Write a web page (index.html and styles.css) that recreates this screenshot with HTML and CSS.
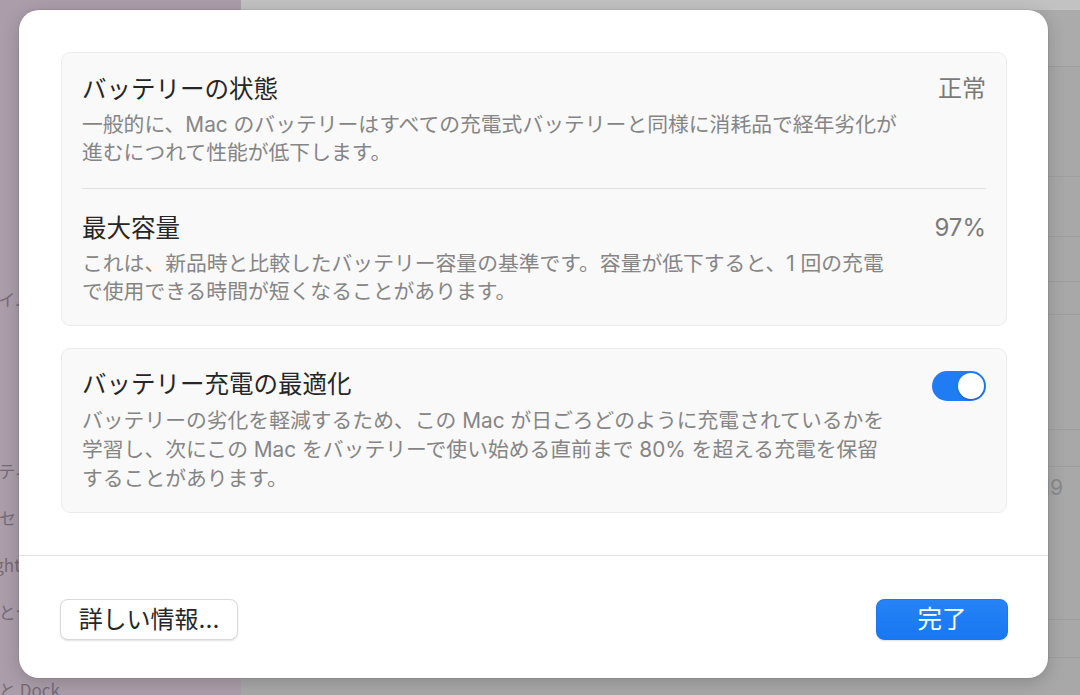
FILE: index.html
```html
<!DOCTYPE html>
<html lang="ja">
<head>
<meta charset="utf-8">
<title>バッテリー</title>
<link rel="stylesheet" href="styles.css">
</head>
<body>
<div class="backdrop">
  <aside class="sidebar">
    <div class="side-group">
      <div class="side-item">通知</div>
      <div class="side-item">サウンド</div>
      <div class="side-item">集中モード</div>
      <div class="side-item">スクリーンタイム</div>
    </div>
    <div class="side-group">
      <div class="side-item">一般</div>
      <div class="side-item">外観</div>
      <div class="side-item">アクセシビリティ</div>
      <div class="side-item">コントロールセンター</div>
      <div class="side-item">Siri と Spotlight</div>
      <div class="side-item">プライバシーとセキュリティ</div>
    </div>
    <div class="side-group">
      <div class="side-item side-item-open">デスクトップと Dock</div>
    </div>
  </aside>
  <main class="main">
    <div class="main-toolbar"></div>
    <div class="main-row r1"></div>
    <div class="main-row r2"></div>
    <div class="main-row r3"></div>
    <div class="main-row r4"></div>
    <div class="main-row r5"></div>
    <div class="main-row r6"></div>
    <div class="main-row r7"></div>
    <div class="main-row r8"><span class="main-num">2019</span></div>
    <div class="main-row r9"></div>
  </main>
</div>

<div class="dialog">
  <div class="dialog-body">
    <section class="card">
      <div class="row">
        <div class="row-head">
          <div class="row-title">バッテリーの状態</div>
          <div class="row-value">正常</div>
        </div>
        <div class="row-desc">一般的に、Mac のバッテリーはすべての充電式バッテリーと同様に消耗品で経年劣化が<br>進むにつれて性能が低下します。</div>
      </div>
      <div class="row row-second">
        <div class="row-head">
          <div class="row-title">最大容量</div>
          <div class="row-value">97%</div>
        </div>
        <div class="row-desc">これは、新品時と比較したバッテリー容量の基準です。容量が低下すると、1 回の充電<br>で使用できる時間が短くなることがあります。</div>
      </div>
    </section>
    <section class="card card-opt">
      <div class="row row-opt">
        <div class="row-head">
          <div class="row-title">バッテリー充電の最適化</div>
          <div class="toggle"><span class="knob"></span></div>
        </div>
        <div class="row-desc desc-opt">バッテリーの劣化を軽減するため、この Mac が日ごろどのように充電されているかを<br>学習し、次にこの Mac をバッテリーで使い始める直前まで 80% を超える充電を保留<br>することがあります。</div>
      </div>
    </section>
  </div>
  <footer class="dialog-footer">
    <button class="btn btn-secondary">詳しい情報...</button>
    <button class="btn btn-primary">完了</button>
  </footer>
</div>
</body>
</html>
```
FILE: styles.css
```css
* { box-sizing: border-box; }
html, body {
  margin: 0;
  padding: 0;
  width: 1080px;
  height: 695px;
  overflow: hidden;
  font-family: "Inter", "Noto Sans CJK JP", sans-serif;
}
.backdrop {
  display: flex;
  width: 1080px;
  height: 695px;
}
.sidebar {
  width: 241px;
  background: #ab9eaa;
  padding-top: 134px;
  overflow: hidden;
  font-family: "Noto Sans CJK JP", sans-serif;
}
.side-group + .side-group { margin-top: 31px; }
.side-item {
  width: 122px;
  height: 47px;
  line-height: 47px;
  font-size: 17px;
  color: #776b76;
  white-space: nowrap;
  overflow: hidden;
  margin-left: -103px;
}
.side-item-open { width: auto; overflow: visible; }
.main {
  flex: 1;
  background: #a8a8a8;
  overflow: hidden;
}
.main-toolbar { height: 10px; background: #c2c2c2; }
.main-row { border-bottom: 1px solid #9e9e9e; }
.r1 { height: 57px; background: #ababab; }
.r2 { height: 110px; }
.r3 { height: 60px; }
.r4 { height: 45px; }
.r5 { height: 33px; }
.r6 { height: 115px; }
.r7 { height: 37px; }
.r8 {
  height: 153px;
  text-align: right;
  padding: 8px 17px 0 0;
}
.r9 { height: 38px; }
.main-num {
  font-size: 21px;
  color: #8a8a8a;
  line-height: 26px;
}

.dialog {
  position: absolute;
  left: 19px;
  top: 10px;
  width: 1029px;
  height: 668px;
  background: #ffffff;
  border-radius: 20px;
  box-shadow: 0 0 0 1px rgba(0,0,0,0.06), 0 4px 18px rgba(0,0,0,0.18);
  display: flex;
  flex-direction: column;
  overflow: hidden;
}
.dialog-body {
  padding: 42px 41px 42px 42px;
  display: flex;
  flex-direction: column;
  gap: 22px;
}
.card {
  background: #f9f9f9;
  border: 1px solid #ececec;
  border-radius: 9px;
}
.row {
  margin: 0 20px;
  padding: 21px 0 21px;
}
.row-second {
  border-top: 1px solid #e2e2e2;
  padding: 24px 0 19px;
}
.row-opt { padding: 20px 0 19px; }
.row-head {
  display: flex;
  justify-content: space-between;
  align-items: flex-start;
}
.row-title {
  font-size: 24.5px;
  line-height: 30px;
  color: #262626;
}
.row-value {
  font-size: 24px;
  line-height: 30px;
  color: #7a7a7a;
}
.row-desc {
  margin-top: 7px;
  font-size: 20.8px;
  line-height: 28px;
  color: #858585;
  white-space: nowrap;
}
.desc-opt {
  margin-top: 5px;
  line-height: 29px;
}
.toggle {
  width: 54px;
  height: 30px;
  margin-top: 2px;
  border-radius: 15px;
  background: #1f7cf3;
  position: relative;
}
.knob {
  position: absolute;
  right: 2px;
  top: 2px;
  width: 26px;
  height: 26px;
  border-radius: 50%;
  background: #ffffff;
  box-shadow: 0 1px 2px rgba(0,0,0,0.25);
}
.dialog-footer {
  border-top: 1px solid #e3e3e3;
  padding: 43px 40px 41px 41px;
  display: flex;
  justify-content: space-between;
  align-items: center;
}
.btn {
  height: 41px;
  border-radius: 8px;
  font-family: "Inter", "Noto Sans CJK JP", sans-serif;
  font-size: 24px;
  line-height: 39px;
  padding: 0;
  cursor: default;
}
.btn-secondary {
  width: 178px;
  background: #ffffff;
  color: #262626;
  border: 1px solid #d9d9d9;
  box-shadow: 0 1px 2px rgba(0,0,0,0.12);
}
.btn-primary {
  width: 132px;
  font-size: 24.5px;
  background: linear-gradient(#2683f6, #1877f2);
  color: #ffffff;
  border: 1px solid #1b78f0;
  box-shadow: 0 1px 2px rgba(0,0,0,0.12);
}
```
